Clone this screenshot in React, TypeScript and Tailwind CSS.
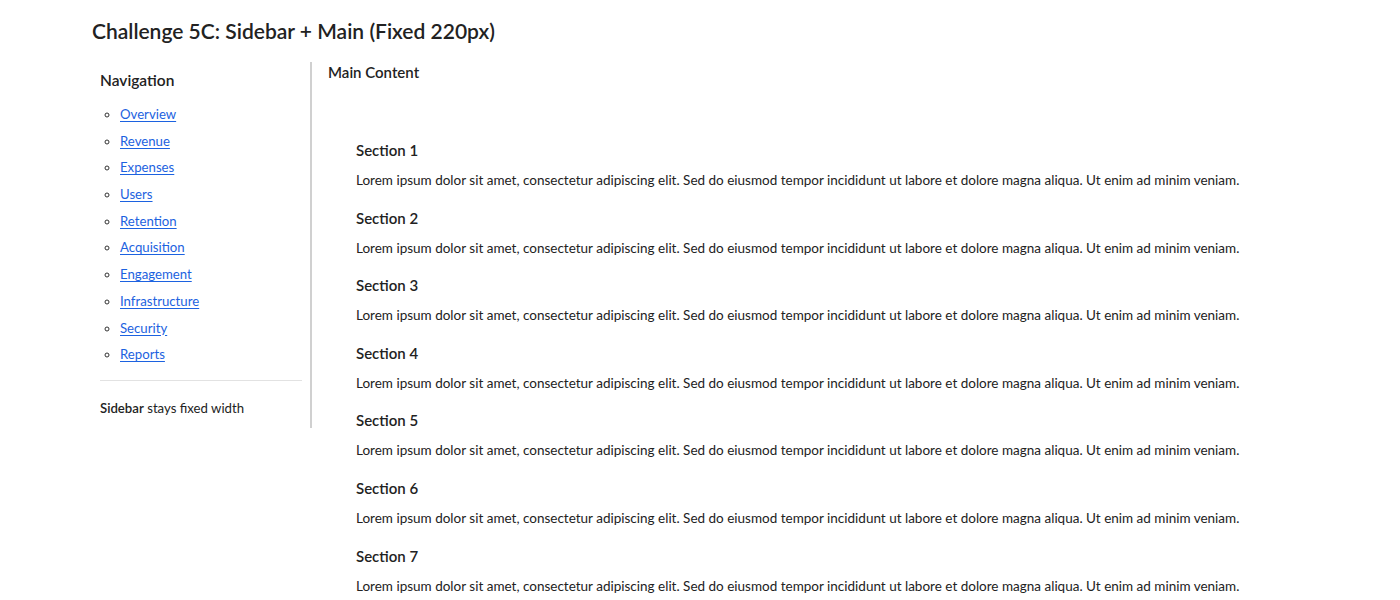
import React from 'react';

const navItems = [
  'Overview',
  'Revenue',
  'Expenses',
  'Users',
  'Retention',
  'Acquisition',
  'Engagement',
  'Infrastructure',
  'Security',
  'Reports',
];

const sections = [1, 2, 3, 4, 5, 6, 7];

const lorem =
  'Lorem ipsum dolor sit amet, consectetur adipiscing elit. Sed do eiusmod tempor incididunt ut labore et dolore magna aliqua. Ut enim ad minim veniam.';

export default function App() {
  return (
    <div className="min-h-screen bg-white text-[#222] font-['Lato','Liberation_Sans',sans-serif] pl-[92px] pt-[17px]">
      {/* Title */}
      <h1 className="text-[21px] leading-[28px] font-semibold">Challenge 5C: Sidebar + Main (Fixed 220px)</h1>

      <div className="flex mt-[17px]">
        {/* Sidebar */}
        <aside className="w-[220px] shrink-0 self-start border-r-2 border-[#d0d0d0] p-2 pb-[11px]">
          <h2 className="text-[15.5px] leading-[20px] font-semibold">Navigation</h2>
          <ul className="list-[circle] pl-5 mt-[14px] flex flex-col gap-[6.7px] text-[13.2px] leading-[20px] marker:text-[#333]">
            {navItems.map((item) => (
              <li key={item}>
                <a href="#" className="text-[#1c62e0] underline underline-offset-2">
                  {item}
                </a>
              </li>
            ))}
          </ul>
          <hr className="mt-4 border-t border-[#e2e2e2]" />
          <p className="mt-[18px] text-[13.2px] leading-[18px]">
            <span className="font-semibold">Sidebar</span> stays fixed width
          </p>
        </aside>

        {/* Main */}
        <main className="flex-1 pl-4">
          <h2 className="text-[15px] leading-[20px] font-semibold">Main Content</h2>
          <div className="pl-7 pt-[58px] flex flex-col gap-[17.6px]">
            {sections.map((n) => (
              <section key={n}>
                <h3 className="text-[15px] leading-[20px] font-semibold">Section {n}</h3>
                <p className="mt-[10px] text-[13.5px] leading-[20px]">{lorem}</p>
              </section>
            ))}
          </div>
        </main>
      </div>
    </div>
  );
}
